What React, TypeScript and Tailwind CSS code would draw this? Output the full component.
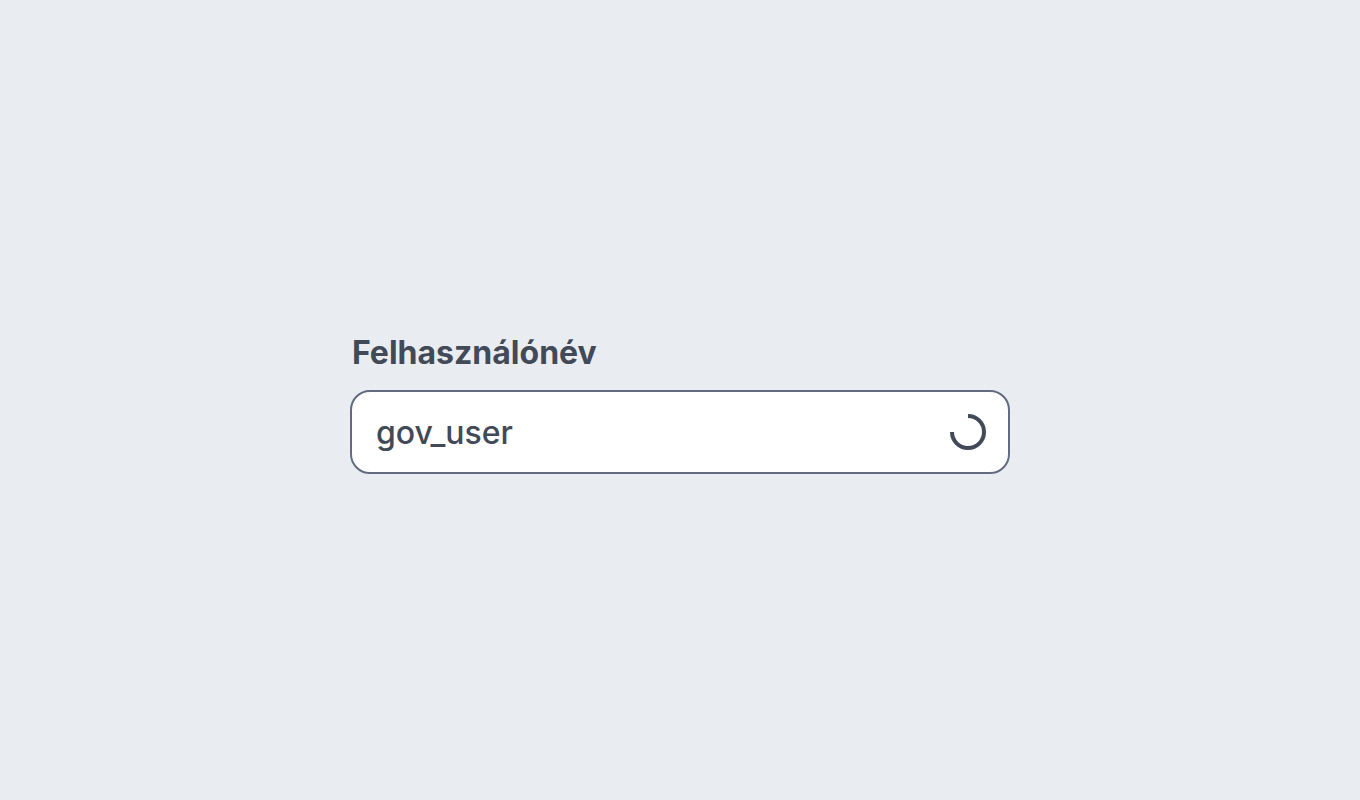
export default function App() {
  return (
    <main className="flex min-h-screen items-center justify-center bg-[#e9edf1] px-6 font-['Inter',sans-serif] text-[#424957]">
      <div className="flex w-full max-w-[660px] flex-col gap-4 pt-1.5">
        <label htmlFor="username" className="px-0.5 text-[32px] leading-[42px] font-bold">
          Felhasználónév
        </label>
        <div className="flex h-[84px] items-center gap-4 rounded-[20px] border-2 border-[#636c7e] bg-white pr-5 pl-6">
          <input
            id="username"
            type="text"
            defaultValue="gov_user"
            aria-busy="true"
            className="min-w-0 flex-1 bg-transparent pt-0.5 text-[32px] leading-[42px] font-medium outline-none"
          />
          <svg viewBox="0 0 40 40" className="size-10 shrink-0" fill="none" aria-hidden="true">
            <path d="M20 4A16 16 0 1 1 4 20" stroke="currentColor" strokeWidth="4" />
          </svg>
        </div>
      </div>
    </main>
  );
}
